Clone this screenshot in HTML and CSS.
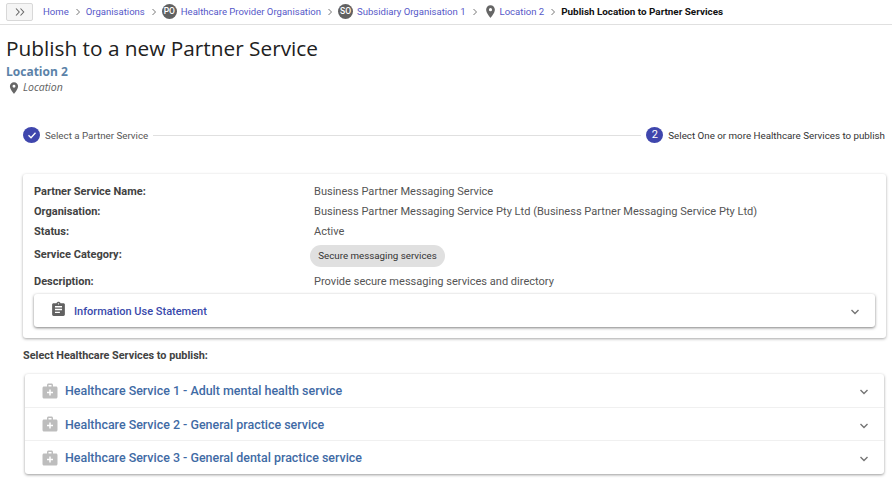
FILE: index.html
```html
<!DOCTYPE html>
<html lang="en">
<head>
<meta charset="utf-8">
<title>Publish to a new Partner Service</title>
<link rel="stylesheet" href="styles.css">
</head>
<body>
<nav class="topbar">
  <button class="expand" type="button" aria-label="Expand">
    <svg viewBox="0 0 12 10" width="12" height="10"><path d="M2 1.500 5.200 5 2 8.500M6.500 1.500 9.700 5 6.500 8.500" fill="none" stroke="#666" stroke-width="1.100"/></svg>
  </button>
  <a class="crumb">Home</a>
  <svg class="sep" viewBox="0 0 4 8"><path d="M.5 1 3.500 4 .5 7" fill="none" stroke="#777" stroke-width="1"/></svg>
  <a class="crumb">Organisations</a>
  <svg class="sep" viewBox="0 0 4 8"><path d="M.5 1 3.500 4 .5 7" fill="none" stroke="#777" stroke-width="1"/></svg>
  <span class="avatar">PO</span>
  <a class="crumb">Healthcare Provider Organisation</a>
  <svg class="sep" viewBox="0 0 4 8"><path d="M.5 1 3.500 4 .5 7" fill="none" stroke="#777" stroke-width="1"/></svg>
  <span class="avatar">SO</span>
  <a class="crumb">Subsidiary Organisation 1</a>
  <svg class="sep" viewBox="0 0 4 8"><path d="M.5 1 3.500 4 .5 7" fill="none" stroke="#777" stroke-width="1"/></svg>
  <svg class="pin-crumb" viewBox="0 0 24 24"><path d="M12 2C8.100 2 5 5.100 5 9c0 5.200 7 13 7 13s7-7.800 7-13c0-3.900-3.100-7-7-7zm0 9.500A2.500 2.500 0 1 1 12 6.500a2.500 2.500 0 0 1 0 5z" fill="#666"/></svg>
  <a class="crumb">Location 2</a>
  <svg class="sep" viewBox="0 0 4 8"><path d="M.5 1 3.500 4 .5 7" fill="none" stroke="#777" stroke-width="1"/></svg>
  <strong class="current">Publish Location to Partner Services</strong>
</nav>

<header class="heading">
  <h1>Publish to a new Partner Service</h1>
  <h2>Location 2</h2>
  <p class="kind">
    <svg viewBox="0 0 24 24" width="14" height="14"><path d="M12 2C8.100 2 5 5.100 5 9c0 5.200 7 13 7 13s7-7.800 7-13c0-3.900-3.100-7-7-7zm0 9.500A2.500 2.500 0 1 1 12 6.500a2.500 2.500 0 0 1 0 5z" fill="#666"/></svg>
    <em>Location</em>
  </p>
</header>

<section class="stepper">
  <span class="step-dot"><svg viewBox="0 0 16 16" width="16" height="16"><path d="M4.500 8.300 7 10.700 11.500 5.800" fill="none" stroke="#fff" stroke-width="1.300"/></svg></span>
  <span class="step-label">Select a Partner Service</span>
  <span class="step-line"></span>
  <span class="step-dot">2</span>
  <span class="step-label step-active">Select One or more Healthcare Services to publish</span>
</section>

<section class="card">
  <dl class="facts">
    <dt>Partner Service Name:</dt><dd>Business Partner Messaging Service</dd>
    <dt>Organisation:</dt><dd>Business Partner Messaging Service Pty Ltd (Business Partner Messaging Service Pty Ltd)</dd>
    <dt>Status:</dt><dd>Active</dd>
    <dt class="dt-chip">Service Category:</dt><dd class="dd-chip"><span class="chip">Secure messaging services</span></dd>
    <dt>Description:</dt><dd>Provide secure messaging services and directory</dd>
  </dl>
  <div class="info-panel">
    <svg class="clip" viewBox="0 0 24 24" width="17" height="17"><path d="M19 3h-4.200C14.400 1.800 13.300 1 12 1s-2.400.8-2.800 2H5c-1.100 0-2 .9-2 2v14c0 1.100.9 2 2 2h14c1.100 0 2-.9 2-2V5c0-1.100-.9-2-2-2zm-7 0c.6 0 1 .4 1 1s-.4 1-1 1-1-.4-1-1 .4-1 1-1zm2 14H7v-2h7v2zm3-4H7v-2h10v2zm0-4H7V7h10v2z" fill="#616161"/></svg>
    <span class="info-title">Information Use Statement</span>
    <svg class="chev" viewBox="0 0 12 8" width="12" height="8"><path d="M2.500 2 6 5.500 9.500 2" fill="none" stroke="#757575" stroke-width="1.400"/></svg>
  </div>
</section>

<h3 class="select-title">Select Healthcare Services to publish:</h3>

<section class="services">
  <div class="service">
    <svg class="kit" viewBox="0 0 24 24" width="18" height="18"><path d="M20 6h-4V4c0-1.100-.9-2-2-2h-4c-1.100 0-2 .9-2 2v2H4c-1.100 0-2 .9-2 2v12c0 1.100.9 2 2 2h16c1.100 0 2-.9 2-2V8c0-1.100-.9-2-2-2zM10 4h4v2h-4V4zm6 11h-3v3h-2v-3H8v-2h3v-3h2v3h3v2z" fill="#bdbdbd"/></svg>
    <span class="service-title">Healthcare Service 1 - Adult mental health service</span>
    <svg class="chev" viewBox="0 0 12 8" width="12" height="8"><path d="M2.500 2 6 5.500 9.500 2" fill="none" stroke="#757575" stroke-width="1.400"/></svg>
  </div>
  <div class="service">
    <svg class="kit" viewBox="0 0 24 24" width="18" height="18"><path d="M20 6h-4V4c0-1.100-.9-2-2-2h-4c-1.100 0-2 .9-2 2v2H4c-1.100 0-2 .9-2 2v12c0 1.100.9 2 2 2h16c1.100 0 2-.9 2-2V8c0-1.100-.9-2-2-2zM10 4h4v2h-4V4zm6 11h-3v3h-2v-3H8v-2h3v-3h2v3h3v2z" fill="#bdbdbd"/></svg>
    <span class="service-title">Healthcare Service 2 - General practice service</span>
    <svg class="chev" viewBox="0 0 12 8" width="12" height="8"><path d="M2.500 2 6 5.500 9.500 2" fill="none" stroke="#757575" stroke-width="1.400"/></svg>
  </div>
  <div class="service">
    <svg class="kit" viewBox="0 0 24 24" width="18" height="18"><path d="M20 6h-4V4c0-1.100-.9-2-2-2h-4c-1.100 0-2 .9-2 2v2H4c-1.100 0-2 .9-2 2v12c0 1.100.9 2 2 2h16c1.100 0 2-.9 2-2V8c0-1.100-.9-2-2-2zM10 4h4v2h-4V4zm6 11h-3v3h-2v-3H8v-2h3v-3h2v3h3v2z" fill="#bdbdbd"/></svg>
    <span class="service-title">Healthcare Service 3 - General dental practice service</span>
    <svg class="chev" viewBox="0 0 12 8" width="12" height="8"><path d="M2.500 2 6 5.500 9.500 2" fill="none" stroke="#757575" stroke-width="1.400"/></svg>
  </div>
</section>
</body>
</html>
```

FILE: styles.css
```css
* { box-sizing: border-box; }
html, body { margin: 0; padding: 0; background: #fff; }
body { width: 892px; height: 478px; overflow: hidden; font-family: Roboto, "Liberation Sans", sans-serif; color: #424242; }

.topbar { height: 25px; display: flex; align-items: center; padding: 0 0 1px 6px; border-bottom: 1px solid #e0e0e0; font-family: Roboto, sans-serif; font-size: 9.550px; white-space: nowrap; }
.expand { width: 27px; height: 18px; margin: 0 10px 0 0; padding: 0; display: flex; align-items: center; justify-content: center; background: #f5f5f5; border: 1px solid #d8d8d8; border-radius: 2px; }
.crumb { color: #5558c8; }
.sep { width: 4px; height: 8px; margin: 0 6px 0 7px; flex: none; }
.avatar { width: 15px; height: 15px; margin-right: 4px; border-radius: 50%; background: #616161; color: #fff; font-size: 8.500px; font-weight: 500; line-height: 15px; text-align: center; flex: none; }
.pin-crumb { width: 15px; height: 15px; margin-right: 2px; flex: none; }
.current { color: #111; font-weight: 700; font-size: 9.900px; }

.heading { padding: 0 0 0 6px; font-family: "Open Sans", sans-serif; }
h1 { margin: 8px 0 0; font-size: 20.800px; line-height: 31px; font-weight: 400; color: #212121; }
h2 { margin: 0; font-size: 12px; line-height: 16px; font-weight: 700; color: #5b82a8; }
.kind { margin: 0; padding-left: 1px; display: flex; align-items: center; gap: 2px; font-size: 10.500px; line-height: 15px; color: #616161; }

.stepper { height: 16px; margin: 32px 7px 0 23px; display: flex; align-items: center; font-size: 9.780px; }
.step-dot { width: 17px; height: 16px; border-radius: 50%; background: #3f46ad; color: #fff; font-size: 11px; line-height: 16px; text-align: center; flex: none; }
.step-label { margin-left: 5px; color: #555; white-space: nowrap; }
.step-active { color: #333; }
.step-line { flex: 1; height: 1px; margin: 0 5px; background: #e0e0e0; }

.card { width: 863px; height: 164px; margin: 31px 0 0 23px; padding: 8px 11px 0; border-radius: 3px; box-shadow: 0 1px 3px rgba(0,0,0,.35); }
.facts { margin: 0; display: grid; grid-template-columns: 280px 1fr; font-size: 11.050px; }
.facts dt { font-weight: 700; font-size: 11px; line-height: 20px; color: #424242; }
.facts dd { margin: 0; line-height: 20px; color: #555; }
.facts .dt-chip { line-height: 26px; padding-bottom: 4px; }
.facts .dd-chip { height: 30px; padding: 3px 0 0; }
.chip { display: block; width: 135px; height: 22px; margin-left: -4px; border-radius: 11px; background: #e0e0e0; color: #333; font-size: 9.750px; line-height: 22px; text-align: center; }
.info-panel { height: 33px; margin-top: 2px; display: flex; align-items: center; padding: 0 14px 0 16px; border-radius: 3px; background: #fff; box-shadow: 0 1px 3px rgba(0,0,0,.5); }
.clip { flex: none; margin-top: -2px; }
.info-title { flex: 1; margin: 1px 0 0 7px; font-size: 11px; font-weight: 500; color: #3949ab; }
.chev { flex: none; margin-top: 3px; }

.select-title { margin: 11px 0 0 23px; font-size: 10.850px; line-height: 14px; font-weight: 700; color: #424242; }

.services { width: 859px; margin: 11px 0 0 25px; border-radius: 3px; box-shadow: 0 1px 3px rgba(0,0,0,.4); }
.service { height: 33px; display: flex; align-items: center; padding: 0 14px 0 16px; border-top: 1px solid #f0f0f0; }
.service:first-child { border-top: 0; }
.service:last-child { height: 34px; }
.kit { flex: none; }
.service-title { flex: 1; margin-left: 6px; font-size: 12.450px; font-weight: 500; color: #3f6ba5; }
```
